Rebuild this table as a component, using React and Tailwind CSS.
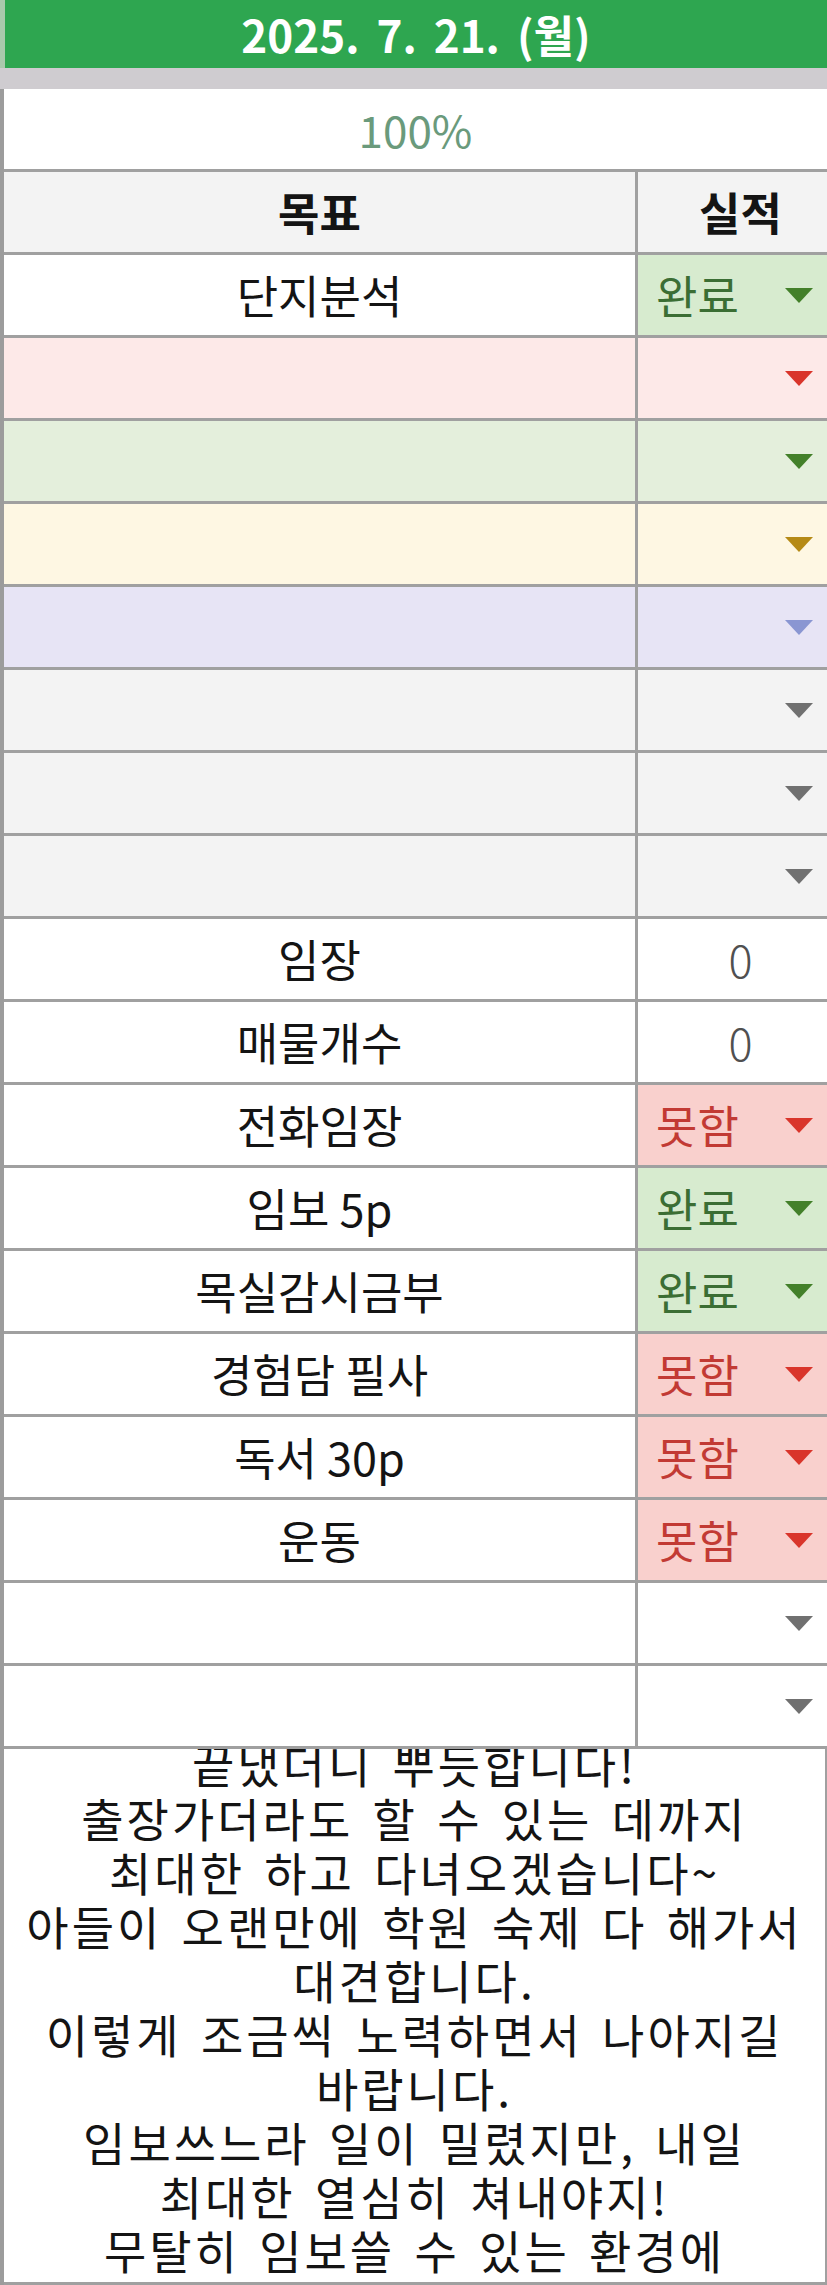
const FONT = { fontFamily: '"Noto Sans CJK KR", "Noto Sans", sans-serif' };

function Arrow({ color }) {
  return (
    <svg width="28" height="15" viewBox="0 0 28 15" className="shrink-0">
      <polygon points="0,0 28,0 14,15" fill={color} />
    </svg>
  );
}

const rows = [
  { label: "단지분석", status: "done" },
  { label: "", rowBg: "bg-[#fde9e8]", arrow: "#d9352b" },
  { label: "", rowBg: "bg-[#e4efdc]", arrow: "#43802a" },
  { label: "", rowBg: "bg-[#fef7e3]", arrow: "#b58a16" },
  { label: "", rowBg: "bg-[#e7e4f5]", arrow: "#8a96d2" },
  { label: "", rowBg: "bg-[#f3f3f3]", arrow: "#707070" },
  { label: "", rowBg: "bg-[#f3f3f3]", arrow: "#707070" },
  { label: "", rowBg: "bg-[#f3f3f3]", arrow: "#707070" },
  { label: "임장", value: "0" },
  { label: "매물개수", value: "0" },
  { label: "전화임장", status: "fail" },
  { label: "임보 5p", status: "done" },
  { label: "목실감시금부", status: "done" },
  { label: "경험담 필사", status: "fail" },
  { label: "독서 30p", status: "fail" },
  { label: "운동", status: "fail" },
  { label: "", arrow: "#707070" },
  { label: "", arrow: "#707070" },
];

const memo = [
  "끝냈더니 뿌듯합니다!",
  "출장가더라도 할 수 있는 데까지",
  "최대한 하고 다녀오겠습니다~",
  "아들이 오랜만에 학원 숙제 다 해가서",
  "대견합니다.",
  "이렇게 조금씩 노력하면서 나아지길",
  "바랍니다.",
  "임보쓰느라 일이 밀렸지만, 내일",
  "최대한 열심히 쳐내야지!",
  "무탈히 임보쓸 수 있는 환경에",
];

function RightCell({ row }) {
  if (row.status === "done") {
    return (
      <div className="flex-1 flex items-center justify-between pl-[18px] pr-[14px] bg-[#d7ebcf] border-l-[3px] border-[#a0a0a0]">
        <span className="text-[#3b6e34]">완료</span>
        <Arrow color="#43802a" />
      </div>
    );
  }
  if (row.status === "fail") {
    return (
      <div className="flex-1 flex items-center justify-between pl-[18px] pr-[14px] bg-[#f9d0cd] border-l-[3px] border-[#a0a0a0]">
        <span className="text-[#c23a34]">못함</span>
        <Arrow color="#d9352b" />
      </div>
    );
  }
  if (row.value) {
    return (
      <div className="flex-1 flex items-center justify-center pl-[16px] border-l-[3px] border-[#a0a0a0]">
        <span className="text-[#505050] font-light">{row.value}</span>
      </div>
    );
  }
  return (
    <div className="flex-1 flex items-center justify-end pr-[14px] border-l-[3px] border-[#a0a0a0]">
      <Arrow color={row.arrow} />
    </div>
  );
}

export default function App() {
  return (
    <div
      className="w-[827px] h-[2285px] overflow-hidden bg-white flex flex-col text-[45px] text-[#141414]"
      style={FONT}
    >
      {/* 날짜 헤더 */}
      <div className="h-[68px] shrink-0 flex items-center justify-center bg-[#2ea650] border-l-[5px] border-[#a9c9ac]">
        <span className="text-white font-bold text-[44px] [word-spacing:7px] leading-none">
          2025. 7. 21. (월)
        </span>
      </div>
      <div className="h-[21px] shrink-0 bg-[#cfccd0]" />

      <div className="flex-1 flex flex-col border-l-[4px] border-[#9c9c9c] min-h-0">
        {/* 달성률 */}
        <div className="h-[83px] shrink-0 flex items-center justify-center border-b-[3px] border-[#a0a0a0] bg-white">
          <span className="text-[#6a9a7c] text-[44px]">100%</span>
        </div>

        {/* 컬럼 헤더 */}
        <div className="h-[83px] shrink-0 flex border-b-[3px] border-[#a0a0a0] bg-[#f3f3f3] font-bold">
          <div className="w-[631px] flex items-center justify-center">목표</div>
          <div className="flex-1 flex items-center justify-center pl-[16px] border-l-[3px] border-[#a0a0a0]">
            실적
          </div>
        </div>

        {rows.map((row, i) => (
          <div
            key={i}
            className={`h-[83px] shrink-0 flex border-b-[3px] border-[#a0a0a0] ${row.rowBg || "bg-white"}`}
          >
            <div className="w-[631px] flex items-center justify-center">{row.label}</div>
            <RightCell row={row} />
          </div>
        ))}

        {/* 메모 */}
        <div className="flex-1 min-h-0 overflow-hidden border-b-[3px] border-r-[2px] border-[#a0a0a0] bg-white">
          <div className="-mt-[13px] flex flex-col items-center text-[46px] leading-[54px] tracking-[3px] [word-spacing:6px]">
            {memo.map((line, i) => (
              <div key={i} className="whitespace-nowrap">
                {line}
              </div>
            ))}
          </div>
        </div>
      </div>
    </div>
  );
}
